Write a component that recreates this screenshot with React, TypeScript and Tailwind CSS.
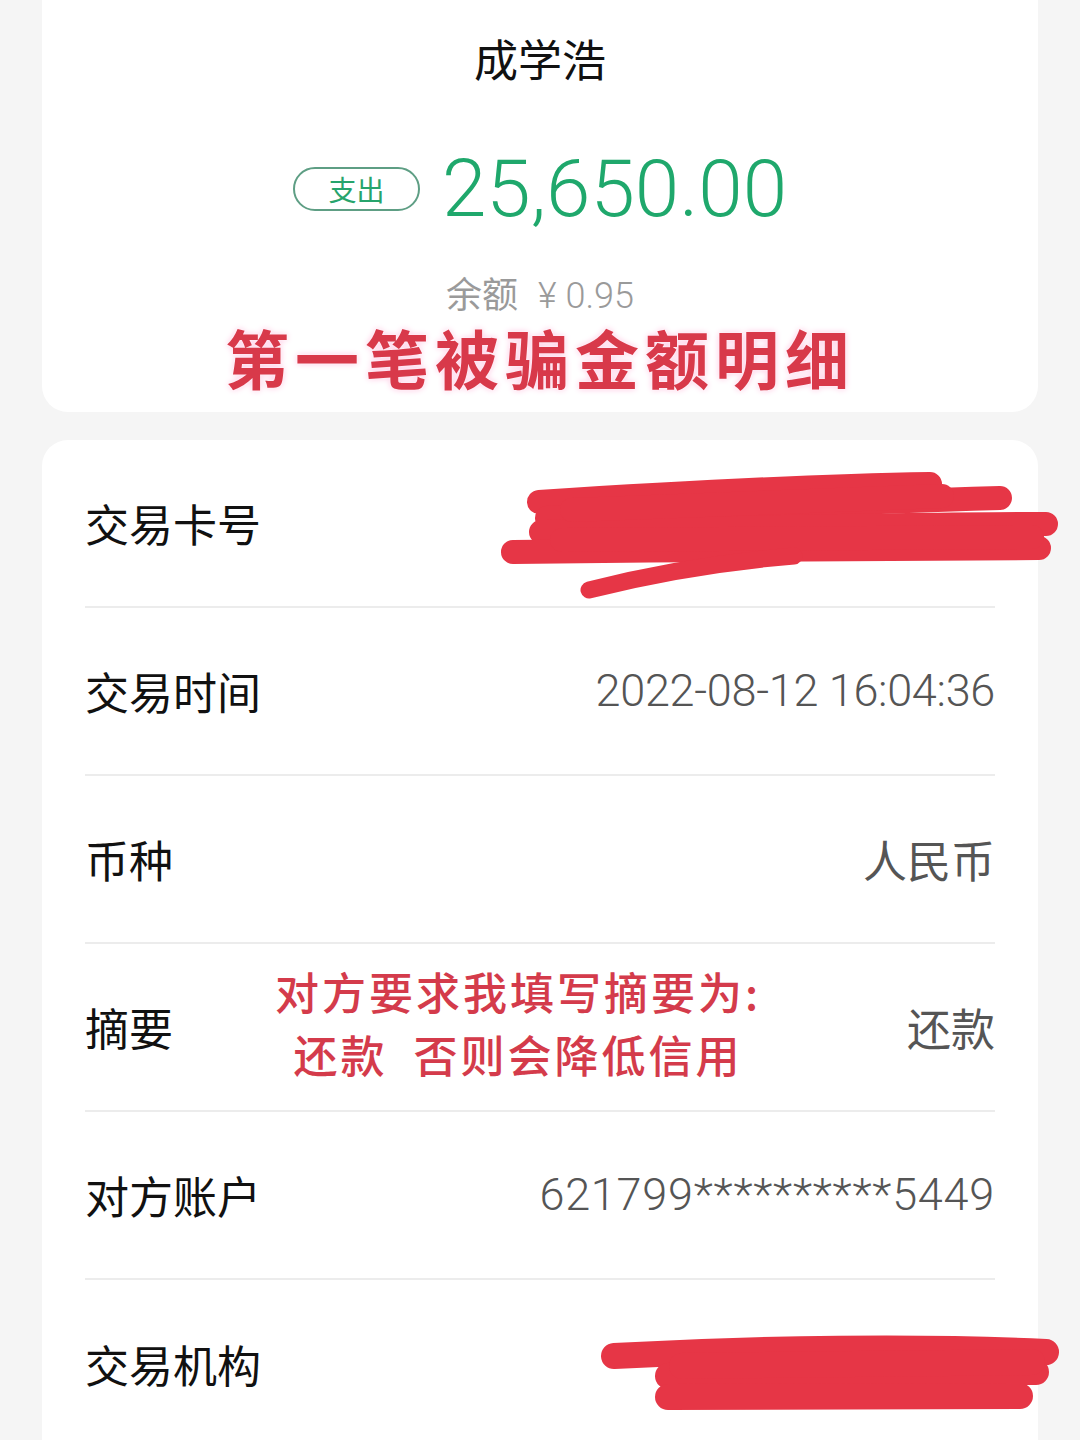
const cjk = "font-['Noto_Sans_CJK_SC','Noto_Sans',sans-serif]";
const num = "font-['Roboto','Noto_Sans_CJK_SC',sans-serif]";

type Row = { label: string; value?: string; numeric?: boolean; wide?: boolean };

const rows: Row[] = [
  { label: "交易卡号" },
  { label: "交易时间", value: "2022-08-12 16:04:36", numeric: true },
  { label: "币种", value: "人民币" },
  { label: "摘要", value: "还款" },
  { label: "对方账户", value: "621799**********5449", numeric: true, wide: true },
  { label: "交易机构" },
];

function Scribbles() {
  // hand-drawn marker strokes that hide the card number and the bank name
  return (
    <svg
      className="pointer-events-none absolute left-0 top-0 overflow-visible"
      width="996"
      height="1000"
      viewBox="0 0 996 1000"
      aria-hidden
    >
      <g fill="none" stroke="#e63646" strokeLinecap="round" strokeLinejoin="round">
        <path d="M497 62 C620 54 760 46 888 44" strokeWidth="24" />
        <path d="M505 78 C650 70 820 62 958 58" strokeWidth="24" />
        <path d="M499 92 C680 88 860 84 1004 84" strokeWidth="24" />
        <path d="M471 112 C650 110 840 108 997 108" strokeWidth="24" />
        <path d="M520 100 L990 97" strokeWidth="24" />
        <path d="M530 70 L900 56" strokeWidth="24" />
        <path d="M547 150 C610 134 680 122 752 116" strokeWidth="17" />
        <path d="M572 916 C720 908 880 906 1004 912" strokeWidth="26" />
        <path d="M626 936 C760 932 900 932 994 932" strokeWidth="26" />
        <path d="M626 957 C760 956 880 956 978 956" strokeWidth="26" />
        <path d="M640 926 L990 922" strokeWidth="26" />
      </g>
    </svg>
  );
}

export default function App() {
  return (
    <div className={`min-h-[1440px] overflow-hidden bg-[#f5f5f5] px-[42px] ${cjk}`}>
      {/* summary card */}
      <section className="flex h-[412px] flex-col items-center rounded-b-[26px] bg-white">
        <h1 className="pt-[30px] text-[44px] leading-[56px] text-[#111]">成学浩</h1>

        <div className="mt-[63px] flex items-center gap-[22px]">
          <span className="flex h-[44px] w-[127px] items-center justify-center rounded-full border-2 border-[#5e9e84] text-[28px] text-[#27a46c]">
            支出
          </span>
          <span className={`${num} text-[80px] font-light leading-none text-[#1fa86c]`}>25,650.00</span>
        </div>

        <p className="mt-[44px] text-[36px] leading-[38px] text-[#9a9a9a]">
          余额<span className={`${num} ml-[20px] font-light`}>¥ 0.95</span>
        </p>
        <p className="mt-[8px] text-[64px] font-semibold leading-[66px] tracking-[6px] text-[#d8394a] [text-shadow:0_0_3px_#fff,0_0_6px_#fbd]">
          第一笔被骗金额明细
        </p>
      </section>

      {/* detail card */}
      <section className="relative mt-[28px] rounded-t-[26px] bg-white px-[43px]">
        {rows.map((r, i) => (
          <div
            key={r.label}
            className={`flex h-[168px] items-center ${i < rows.length - 1 ? "border-b-2 border-[#ececec]" : ""}`}
          >
            <span className="text-[44px] text-[#111]">{r.label}</span>
            {r.label === "摘要" ? (
              <div className="-mt-[8px] flex-1 pr-[44px] text-center text-[44px] font-medium leading-[63px] tracking-[3px] text-[#d43b4b]">
                <p>对方要求我填写摘要为:</p>
                <p>还款&nbsp;&nbsp;否则会降低信用</p>
              </div>
            ) : (
              <span className="flex-1" />
            )}
            {r.value ? (
              <span
                className={
                  r.numeric
                    ? `${num} text-[45px] font-light text-[#555] ${r.wide ? "tracking-[0.75px]" : "tracking-[-0.3px]"}`
                    : "text-[44px] text-[#555]"
                }
              >
                {r.value}
              </span>
            ) : null}
          </div>
        ))}
        <Scribbles />
      </section>
    </div>
  );
}
